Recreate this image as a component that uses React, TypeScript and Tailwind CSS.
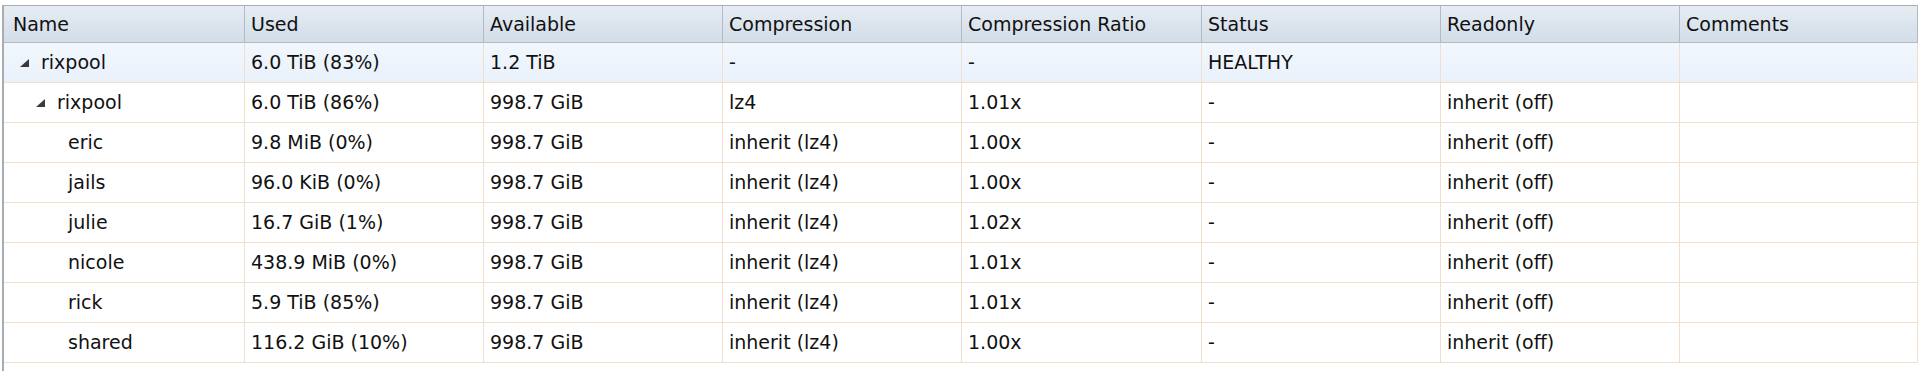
import React from 'react'

type Row = {
  name: string
  level: number
  expandable?: boolean
  selected?: boolean
  cells: string[]
}

const columns = ['Name', 'Used', 'Available', 'Compression', 'Compression Ratio', 'Status', 'Readonly', 'Comments']

const rows: Row[] = [
  { name: 'rixpool', level: 0, expandable: true, selected: true, cells: ['6.0 TiB (83%)', '1.2 TiB', '-', '-', 'HEALTHY', '', ''] },
  { name: 'rixpool', level: 1, expandable: true, cells: ['6.0 TiB (86%)', '998.7 GiB', 'lz4', '1.01x', '-', 'inherit (off)', ''] },
  { name: 'eric', level: 2, cells: ['9.8 MiB (0%)', '998.7 GiB', 'inherit (lz4)', '1.00x', '-', 'inherit (off)', ''] },
  { name: 'jails', level: 2, cells: ['96.0 KiB (0%)', '998.7 GiB', 'inherit (lz4)', '1.00x', '-', 'inherit (off)', ''] },
  { name: 'julie', level: 2, cells: ['16.7 GiB (1%)', '998.7 GiB', 'inherit (lz4)', '1.02x', '-', 'inherit (off)', ''] },
  { name: 'nicole', level: 2, cells: ['438.9 MiB (0%)', '998.7 GiB', 'inherit (lz4)', '1.01x', '-', 'inherit (off)', ''] },
  { name: 'rick', level: 2, cells: ['5.9 TiB (85%)', '998.7 GiB', 'inherit (lz4)', '1.01x', '-', 'inherit (off)', ''] },
  { name: 'shared', level: 2, cells: ['116.2 GiB (10%)', '998.7 GiB', 'inherit (lz4)', '1.00x', '-', 'inherit (off)', ''] },
]

const gridCols = 'grid grid-cols-[241px_239px_239px_239px_240px_239px_239px_238px]'

function Expander() {
  return (
    <svg width="9" height="8" viewBox="0 0 9 8" className="shrink-0">
      <polygon points="9,0 9,8 0,8" fill="#3a3a3a" />
    </svg>
  )
}

export default function App() {
  return (
    <div
      className="h-[371px] w-[1920px] overflow-hidden bg-white pt-[5px] pl-[2px] text-[19px] text-[#111]"
      style={{ fontFamily: '"DejaVu Sans", Verdana, sans-serif' }}
    >
      <div className="h-full w-[1916px] border-l-2 border-t border-[#a8adb4]">
        <div className={`${gridCols} h-[37px] border-b border-[#b4bac2] bg-gradient-to-b from-[#e6edf4] to-[#d2dde8]`}>
          {columns.map((c, i) => (
            <div
              key={c}
              className={`flex items-center border-r border-[#b4bac2] ${i === 0 ? 'pl-[9px]' : 'pl-[6px]'}`}
            >
              {c}
            </div>
          ))}
        </div>

        {rows.map((row, ri) => (
          <div
            key={ri}
            className={`${gridCols} h-[40px] border-b border-[#f1dfcc] ${row.selected ? 'bg-gradient-to-b from-[#f2f7fd] to-[#e9f1fb]' : 'bg-white'}`}
          >
            <div
              className="flex items-center border-r border-[#f1dfcc]"
              style={{ paddingLeft: 16 + row.level * 16 }}
            >
              {row.expandable ? (
                <span className="flex w-[21px] items-center">
                  <Expander />
                </span>
              ) : (
                <span className="w-[21px]" />
              )}
              <span className={row.expandable ? '' : '-ml-[5px]'}>{row.name}</span>
            </div>
            {row.cells.map((v, ci) => (
              <div key={ci} className="flex items-center border-r border-[#f1dfcc] pl-[6px]">
                {v}
              </div>
            ))}
          </div>
        ))}
      </div>
    </div>
  )
}
